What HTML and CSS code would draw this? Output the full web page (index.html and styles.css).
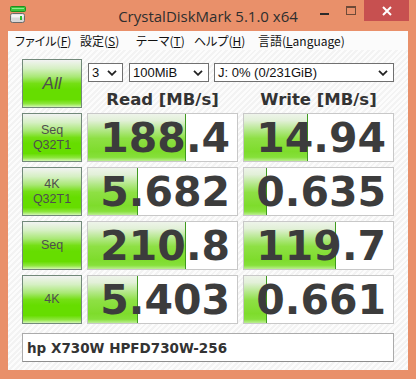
FILE: index.html
```html
<!DOCTYPE html>
<html lang="ja">
<head>
<meta charset="utf-8">
<title>CrystalDiskMark 5.1.0 x64</title>
<link rel="stylesheet" href="styles.css">
</head>
<body>
<div class="window">
  <div class="titlebar">
    <div class="tb-left">
      <svg class="app-icon" width="16" height="17" viewBox="0 0 16 17">
        <rect x="0.5" y="0.5" width="15" height="5" rx="1" fill="#3cc43c" stroke="#1f8f1f"/>
        <rect x="2" y="2" width="12" height="1" fill="#8ee88e"/>
        <rect x="0.5" y="7.5" width="14" height="9" rx="2" fill="#d8d8d8" stroke="#6a6a6a"/>
        <rect x="1.5" y="8.5" width="12" height="3" fill="#f4f4f4"/>
        <rect x="10" y="10" width="2" height="4" fill="#2bbf2b"/>
      </svg>
    </div>
    <div class="title">CrystalDiskMark 5.1.0 x64</div>
    <div class="tb-right">
      <div class="ctl ctl-min"><span class="min-glyph"></span></div>
      <div class="ctl ctl-max"><span class="max-glyph"></span></div>
      <div class="ctl ctl-close">
        <svg width="10" height="10" viewBox="0 0 10 10"><path d="M1 1L9 9M9 1L1 9" stroke="#fff" stroke-width="2"/></svg>
      </div>
    </div>
  </div>
  <div class="menubar">
    <span class="menu m1">ファイル(<u>F</u>)</span>
    <span class="menu m2">設定(<u>S</u>)</span>
    <span class="menu m3">テーマ(<u>T</u>)</span>
    <span class="menu m4">ヘルプ(<u>H</u>)</span>
    <span class="menu m5">言語(<u>L</u>anguage)</span>
  </div>
  <div class="client">
    <div class="grid">
      <div class="btn btn-all">All</div>
      <div class="top-right">
        <div class="combos">
          <div class="combo c-count"><span>3</span><svg class="chev" width="10" height="6" viewBox="0 0 10 6"><path d="M1 0.8L5 4.8L9 0.8" fill="none" stroke="#222" stroke-width="1.8"/></svg></div>
          <div class="combo c-size"><span>100MiB</span><svg class="chev" width="10" height="6" viewBox="0 0 10 6"><path d="M1 0.8L5 4.8L9 0.8" fill="none" stroke="#222" stroke-width="1.8"/></svg></div>
          <div class="combo c-drive"><span>J: 0% (0/231GiB)</span><svg class="chev" width="10" height="6" viewBox="0 0 10 6"><path d="M1 0.8L5 4.8L9 0.8" fill="none" stroke="#222" stroke-width="1.8"/></svg></div>
        </div>
        <div class="heads">
          <div class="head">Read [MB/s]</div>
          <div class="head">Write [MB/s]</div>
        </div>
      </div>

      <div class="btn btn-label"><span>Seq</span><span>Q32T1</span></div>
      <div class="val"><div class="bar" style="width:66%"></div><span class="num">188.4</span></div>
      <div class="val"><div class="bar" style="width:43%"></div><span class="num">14.94</span></div>

      <div class="btn btn-label"><span>4K</span><span>Q32T1</span></div>
      <div class="val"><div class="bar" style="width:33.6%"></div><span class="num">5.682</span></div>
      <div class="val"><div class="bar" style="width:15.4%"></div><span class="num">0.635</span></div>

      <div class="btn btn-label"><span>Seq</span></div>
      <div class="val"><div class="bar" style="width:66%"></div><span class="num">210.8</span></div>
      <div class="val"><div class="bar" style="width:62%"></div><span class="num">119.7</span></div>

      <div class="btn btn-label"><span>4K</span></div>
      <div class="val"><div class="bar" style="width:33.6%"></div><span class="num">5.403</span></div>
      <div class="val"><div class="bar" style="width:15.4%"></div><span class="num">0.661</span></div>
    </div>
    <div class="name">hp X730W HPFD730W-256</div>
  </div>
</div>
</body>
</html>
```
FILE: styles.css
```css
html, body {
  margin: 0;
  padding: 0;
}
body {
  background: #e9906a;
  width: 416px;
  height: 379px;
  overflow: hidden;
}
.window {
  width: 416px;
  height: 379px;
  background: #e9906a;
  display: flex;
  flex-direction: column;
}
.titlebar {
  height: 31px;
  display: grid;
  grid-template-columns: 1fr auto 1fr;
  align-items: start;
}
.tb-left {
  padding: 6px 0 0 10px;
}
.app-icon {
  display: block;
}
.title {
  font-family: "Open Sans", "Noto Sans", sans-serif;
  font-size: 15px;
  line-height: 20px;
  padding-top: 6px;
  color: #2e2e2e;
  white-space: nowrap;
}
.tb-right {
  display: flex;
  justify-content: flex-end;
  padding-right: 7px;
}
.ctl {
  height: 21px;
  display: flex;
  align-items: center;
  justify-content: center;
}
.ctl-min { width: 27px; }
.ctl-max { width: 26px; }
.ctl-close {
  width: 45px;
  background: #c75050;
}
.ctl-close svg { display: block; }
.min-glyph {
  display: block;
  width: 9px;
  height: 2px;
  background: #2b2b2b;
  margin-top: 6px;
}
.max-glyph {
  display: block;
  width: 8px;
  height: 6px;
  border: 1px solid #6e4a38;
  border-top-width: 2px;
  margin-top: -1px;
}
.menubar {
  margin: 0 8px;
  height: 19px;
  background: #fbfbfb;
  display: flex;
  align-items: center;
  padding-left: 7px;
  font-family: "Noto Sans CJK JP", "Noto Sans", sans-serif;
  font-size: 12px;
  font-feature-settings: "palt" 1;
  color: #111;
  white-space: nowrap;
}
.menu u { text-underline-offset: 1px; }
.m1 { width: 65px; }
.m2 { width: 56px; }
.m3 { width: 58px; }
.m4 { width: 64px; }
.client {
  margin: 0 8px;
  height: 320px;
  box-sizing: border-box;
  padding: 9px 14px 0;
  background: repeating-linear-gradient(135deg, #fcfcfc 0, #fcfcfc 2px, #f3f3f3 2px, #f3f3f3 4px);
}
.grid {
  display: grid;
  grid-template-columns: 60px 151px 151px;
  grid-auto-rows: 49px;
  gap: 5px;
}
.btn {
  box-sizing: border-box;
  border: 1px solid #72897a;
  background: linear-gradient(to bottom, #f2f3f2 0%, #d6f0c4 18%, #a8e874 36%, #74df14 50%, #66dd00 62%, #66dd00 84%, #8ee63e 93%, #d4f6b6 100%);
  color: #4e4e4e;
  font-family: "Liberation Sans", Arial, sans-serif;
  display: flex;
  flex-direction: column;
  align-items: center;
  justify-content: center;
}
.btn-all {
  font-size: 17px;
  font-style: italic;
}
.btn-label {
  font-size: 12.5px;
  line-height: 15px;
}
.top-right {
  grid-column: 2 / 4;
  display: flex;
  flex-direction: column;
}
.combos {
  margin-top: 4px;
  display: flex;
  height: 19px;
  padding-left: 1px;
}
.combo {
  box-sizing: border-box;
  height: 19px;
  border: 1px solid #707070;
  background: #fff;
  display: flex;
  align-items: center;
  justify-content: space-between;
  padding: 0 5px 0 3px;
  font-family: "Liberation Sans", Arial, sans-serif;
  font-size: 13px;
  color: #111;
}
.chev { display: block; }
.c-count { width: 35px; }
.c-size { width: 80px; margin-left: 6px; }
.c-drive { width: 180px; margin-left: 5px; }
.heads {
  margin-top: 8px;
  display: grid;
  grid-template-columns: 151px 151px;
  gap: 5px;
}
.head {
  text-align: center;
  font-family: "DejaVu Sans", Verdana, sans-serif;
  font-weight: bold;
  font-size: 16.5px;
  line-height: 19px;
  color: #333;
}
.val {
  position: relative;
  box-sizing: border-box;
  border: 1px solid #c8c8c8;
  background: #fff;
  display: flex;
  align-items: center;
  justify-content: flex-end;
  padding-right: 7px;
  overflow: hidden;
}
.bar {
  position: absolute;
  left: 0;
  top: 0;
  bottom: 0;
  box-sizing: border-box;
  border-right: 1px solid #3f9a1f;
  background: linear-gradient(to bottom, #eef4ea 0%, #e2f0d8 14%, #b4e88a 34%, #8ee044 52%, #7edc2c 80%, #86e03a 92%, #bcee92 100%);
}
.num {
  position: relative;
  font-family: "DejaVu Sans", Verdana, sans-serif;
  font-weight: bold;
  font-size: 41px;
  line-height: 46px;
  color: #3c3c3c;
  white-space: nowrap;
}
.name {
  margin-top: 9px;
  width: 372px;
  height: 29px;
  box-sizing: border-box;
  border: 1px solid #ababab;
  border-bottom-color: #8e8e8e;
  background: #fff;
  display: flex;
  align-items: center;
  padding-left: 4px;
  font-family: "DejaVu Sans", Verdana, sans-serif;
  font-weight: bold;
  font-size: 13.5px;
  color: #333;
}
```
